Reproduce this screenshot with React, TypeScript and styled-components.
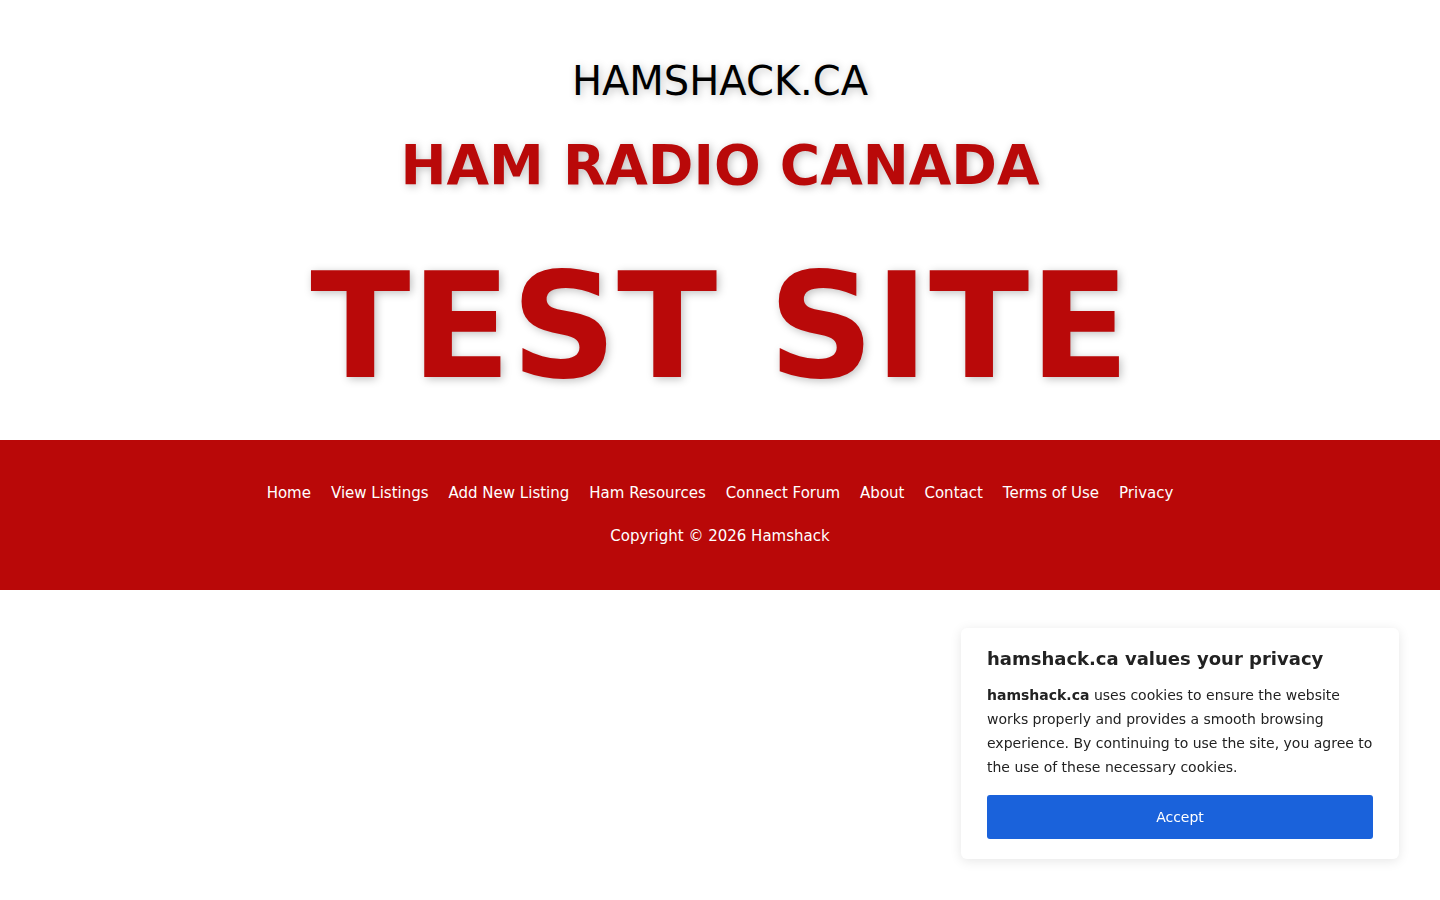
import React, {useState} from "react";
import styled, {createGlobalStyle} from "styled-components";

const GlobalStyle = createGlobalStyle`
  body {
    margin: 0;
    background: #fff;
    font-family: "DejaVu Sans", "Liberation Sans", sans-serif;
  }
`

const Header = styled.header`
  display: flex;
  flex-direction: column;
  align-items: center;
  padding-top: 58px;
  height: 440px;
  box-sizing: border-box;
`

const SiteName = styled.h1`
  margin: 0;
  font-size: 40px;
  font-weight: normal;
  color: #000;
  line-height: 1.164;
  text-shadow: 2px 2px 8px rgba(0, 0, 0, 0.25);
`

const Tagline = styled.h2<{ $size: number; $gap: number }>`
  margin: ${p => p.$gap}px 0 0;
  font-size: ${p => p.$size}px;
  font-weight: bold;
  line-height: 1.164;
  color: #b90909;
  text-shadow: 2px 2px 8px rgba(0, 0, 0, 0.25);
`

const Footer = styled.footer`
  background: #b90808;
  height: 150px;
  box-sizing: border-box;
  padding-top: 44px;
  color: #fff;
  text-align: center;
  font-size: 15px;
`

const Nav = styled.nav`
  display: flex;
  justify-content: center;
  gap: 20px;
  line-height: 18px;
`

const NavLink = styled.a`
  color: #fff;
  text-decoration: none;
`

const Copyright = styled.p`
  margin: 25px 0 0;
  line-height: 18px;
`

const CookieCard = styled.div`
  position: fixed;
  right: 41px;
  bottom: 41px;
  width: 438px;
  box-sizing: border-box;
  padding: 20px 26px;
  background: #fff;
  border-radius: 6px;
  box-shadow: 0 2px 12px rgba(0, 0, 0, 0.1);
  color: #222;
`

const CookieTitle = styled.h3`
  margin: 0;
  font-size: 18px;
  line-height: 21px;
  font-weight: bold;
`

const CookieText = styled.p`
  margin: 14px 0 0;
  font-size: 14px;
  line-height: 24px;
`

const AcceptButton = styled.button`
  display: block;
  width: 100%;
  height: 44px;
  margin-top: 16px;
  border: none;
  border-radius: 3px;
  background: #1a62db;
  color: #fff;
  font-family: inherit;
  font-size: 14px;
  cursor: pointer;
`

const links = ["Home", "View Listings", "Add New Listing", "Ham Resources", "Connect Forum", "About", "Contact", "Terms of Use", "Privacy"]

const App: React.FC = () => {
    const [accepted, setAccepted] = useState(false)

    return (
        <>
            <GlobalStyle/>
            <Header>
                <SiteName>HAMSHACK.CA</SiteName>
                <Tagline $size={55} $gap={28}>HAM RADIO CANADA</Tagline>
                <Tagline $size={147} $gap={44}>TEST SITE</Tagline>
            </Header>
            <Footer>
                <Nav>
                    {links.map(l => (
                        <NavLink key={l} href="#">{l}</NavLink>
                    ))}
                </Nav>
                <Copyright>Copyright © 2026 Hamshack</Copyright>
            </Footer>
            {!accepted && (
                <CookieCard>
                    <CookieTitle>hamshack.ca values your privacy</CookieTitle>
                    <CookieText>
                        <b>hamshack.ca</b> uses cookies to ensure the website works properly and provides a smooth
                        browsing experience. By continuing to use the site, you agree to the use of these necessary
                        cookies.
                    </CookieText>
                    <AcceptButton onClick={() => setAccepted(true)}>Accept</AcceptButton>
                </CookieCard>
            )}
        </>
    )
}

export default App;
